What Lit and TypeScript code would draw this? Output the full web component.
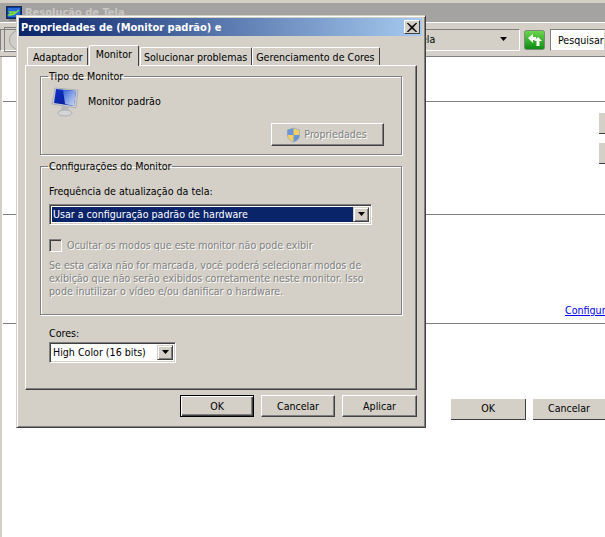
import { LitElement, html, css, svg } from "lit";
import { customElement } from "lit/decorators.js";

const arrow = svg`<svg width="9" height="5" viewBox="0 0 9 5"><path d="M1 0h7L4.500 4z" fill="#000"/></svg>`;

@customElement("app-root")
export class AppRoot extends LitElement {
  static styles = css`
    :host { display: block; width: 605px; height: 537px; position: relative; overflow: hidden; background: #fff;
      font-family: "DejaVu Sans Condensed", "DejaVu Sans", sans-serif; font-stretch: condensed; font-size: 10.6px; color: #000; line-height: 13px; }
    * { box-sizing: border-box; }
    .bg { height: 537px; display: flex; flex-direction: column; padding-left: 3px; background: #fff; box-shadow: inset 2px 0 0 #d4d0c8; }
    .strip { height: 3px; margin-left: -3px; background: #d4d0c8; flex: none; }
    .bgtitle { height: 19px; margin-left: -3px; flex: none; display: flex; align-items: center; gap: 3px; padding-left: 6px; background: #a5a3a2; color: #c9c7c3; font-weight: 700; font-size: 11px; }
    .bgtitle svg { margin-top: 2px; }
    .toolbar { height: 35px; margin-left: -3px; flex: none; background: #d4d0c8; border-bottom: 1px solid #808080; display: flex; align-items: center; justify-content: flex-end; border-top: 1px solid #fff; position: relative; }
    .addr { width: 520px; height: 22px; border: 1px solid; border-color: #808080 #fff #fff #808080; display: flex; align-items: center; justify-content: flex-end; padding-right: 11px; }
    .addr-text { flex: 1; padding-left: 420px; }
    .go { width: 21px; height: 20px; margin: 0 5px 0 4px; flex: none; }
    .search { width: 55px; height: 22px; background: #fff; border: 1px solid; border-color: #808080 #d4d0c8 #d4d0c8 #808080; flex: none; padding: 4px 0 0 7px; white-space: nowrap; overflow: hidden; }
    .back { position: absolute; left: 4px; top: 4px; width: 30px; height: 25px; border: 1px solid #808080; display: flex; align-items: center; padding-left: 4px; }
    .circle { width: 20px; height: 20px; border-radius: 50%; background: #d0cec8; border: 1px solid #a0a0a0; }
    .s1 { height: 45px; flex: none; border-bottom: 1px solid #808080; }
    .s2 { height: 113px; flex: none; border-bottom: 1px solid #808080; display: flex; flex-direction: column; gap: 9px; align-items: flex-end; padding-top: 11px; }
    .stub { width: 6px; height: 21px; background: #d4d0c8; border-bottom: 1px solid #404040; flex: none; }
    .s3 { height: 109px; flex: none; border-bottom: 1px solid #808080; display: flex; align-items: flex-end; padding: 0 0 6px 562px; white-space: nowrap; overflow: hidden; }
    .s3 a { color: #00e; text-decoration: underline; }
    .s4 { display: flex; gap: 7px; padding: 75px 0 0 448px; white-space: nowrap; }
    .flat { width: 75px; height: 21px; flex: none; text-align: center; line-height: 19px; background: #d4d0c8; border-right: 1px solid #404040; border-bottom: 1px solid #404040; }
    .s4 .flat:last-child { width: 72px; border-right: none; }

    .dialog { position: absolute; left: 16px; top: 15px; width: 410px; height: 413px; background: #d4d0c8; border: 1px solid; border-color: #d4d0c8 #404040 #404040 #d4d0c8; box-shadow: inset 1px 1px 0 #fff, inset -1px -1px 0 #808080; padding: 2px 3px 2px 2px; display: flex; flex-direction: column; }
    .dtitle { height: 18px; flex: none; background: linear-gradient(90deg, #0a246a, #a6caf0); color: #fff; font-weight: 700; display: flex; align-items: center; justify-content: space-between; padding: 0 2px 0 2px; font-size: 11px; white-space: nowrap; }
    .close { width: 16px; height: 14px; background: #d4d0c8; border: 1px solid; border-color: #fff #404040 #404040 #fff; display: flex; align-items: center; justify-content: center; }
    .tabs { display: flex; align-items: flex-end; height: 20px; margin: 9px 0 0 8px; position: relative; z-index: 1; flex: none; }
    .tab { height: 18px; padding: 3px 4px 0 3px; background: #d4d0c8; border: 1px solid; border-color: #fff #404040 transparent #fff; border-bottom: none; border-radius: 2px 2px 0 0; white-space: nowrap; margin-right: 1px; }
    .tab:first-child { padding-left: 5px; }
    .tab:nth-child(3) { margin-right: 0; }
    .tab.on { height: 21px; margin: 0 1px -1px 0; padding: 2px 6px 0 6px; }
    .panel { margin-left: 6px; width: 392px; height: 325px; flex: none; background: #d4d0c8; border: 1px solid; border-color: #fff #404040 #404040 #fff; box-shadow: inset -1px -1px 0 #808080; padding: 4px 0 0 14px; }
    fieldset { margin: 0; width: 362px; min-inline-size: 0; border: 1px solid #808080; box-shadow: 1px 1px 0 #fff, inset 1px 1px 0 #fff; padding: 0 8px; display: block; }
    legend { padding: 0 1px; margin-left: -1px; line-height: 13px; }
    .g1 { height: 85px; }
    .g2 { height: 155px; margin-top: 5px; }
    .mon { display: flex; align-items: center; gap: 9px; margin: 2px 0 0 2px; height: 33px; }
    .g1foot { display: flex; justify-content: flex-end; margin: 5px 9px 0 0; }
    .btn { height: 23px; width: 113px; background: #d4d0c8; border: 1px solid; border-color: #fff #404040 #404040 #fff; box-shadow: inset -1px -1px 0 #808080; display: flex; align-items: center; justify-content: center; gap: 3px; padding-right: 2px; }
    .dis { color: #808080; text-shadow: 1px 1px 0 #fff; }
    .lbl { margin-top: 12px; }
    .sel { display: flex; border: 1px solid; border-color: #808080 #fff #fff #808080; box-shadow: inset 1px 1px 0 #404040, inset -1px -1px 0 #d4d0c8; padding: 2px; height: 21px; background: #fff; }
    .sel1 { margin-top: 6px; width: 323px; }
    .sel-text { flex: 1; padding: 1px 0 0 1px; white-space: nowrap; overflow: hidden; }
    .sel1 .sel-text { background: #0a246a; color: #fff; }
    .ddb { width: 16px; flex: none; background: #d4d0c8; border: 1px solid; border-color: #d4d0c8 #404040 #404040 #d4d0c8; box-shadow: inset 1px 1px 0 #fff, inset -1px -1px 0 #808080; display: flex; align-items: center; justify-content: center; }
    .chk { display: flex; align-items: center; gap: 5px; margin-top: 14px; height: 13px; }
    .box { width: 13px; height: 13px; border: 1px solid; border-color: #808080 #fff #fff #808080; box-shadow: inset 1px 1px 0 #404040, inset -1px -1px 0 #d4d0c8; flex: none; }
    .desc { margin-top: 7px; width: 330px; }
    .cores { margin: 12px 0 0 9px; }
    .sel2 { margin: 2px 0 0 9px; width: 127px; height: 21px; }
    .foot { display: flex; gap: 7px; margin: 5px 0 0 161px; flex: none; }
    .b { width: 74px; height: 22px; text-align: center; line-height: 20px; background: #d4d0c8; border: 1px solid; border-color: #fff #404040 #404040 #fff; box-shadow: inset -1px -1px 0 #808080; flex: none; }
    .b.def { border-color: #000; box-shadow: inset 1px 1px 0 #fff, inset -1px -1px 0 #404040, inset -2px -2px 0 #808080; }
    .b.last { width: 75px; }
  `;

  render() {
    return html`
      <div class="bg">
        <div class="strip"></div>
        <div class="bgtitle">
          <svg width="16" height="16" viewBox="0 0 16 16"><rect x=".5" y=".5" width="15" height="12" fill="#0a3a9a" stroke="#1b2b50"/><rect x="2" y="2" width="12" height="9" fill="#2a6ad8"/><path d="M3 9l2-2-1-1h5v1L5 9H3zM7 9l6-5" stroke="#7fe03a" stroke-width="1.500" fill="none"/><rect x="3" y="13" width="10" height="2" fill="#8a8a8a"/></svg>
          <span>Resolução de Tela</span>
        </div>
        <div class="toolbar">
          <div class="back"><div class="circle"></div></div>
          <div class="addr"><span class="addr-text">ela</span>${arrow}</div>
          <svg class="go" viewBox="0 0 21 20">
            <defs><linearGradient id="g" x1="0" y1="0" x2="0" y2="1"><stop offset="0" stop-color="#6ed850"/><stop offset="1" stop-color="#0c8a10"/></linearGradient></defs>
            <rect x=".5" y=".5" width="20" height="19" rx="2" fill="url(#g)" stroke="#7a8a7a"/>
            <path d="M4 8l5-4v3h3v3H9v3z" fill="#fff"/><path d="M14 7l4 4h-2.500v5h-3v-5H10z" fill="#fff"/>
          </svg>
          <div class="search">Pesquisar</div>
        </div>
        <div class="s1"></div>
        <div class="s2"><div class="stub"></div><div class="stub"></div></div>
        <div class="s3"><a>Configur</a></div>
        <div class="s4"><div class="flat">OK</div><div class="flat">Cancelar</div></div>
      </div>

      <div class="dialog">
        <div class="dtitle">
          <span>Propriedades de (Monitor padrão) e</span>
          <div class="close"><svg width="10" height="9" viewBox="0 0 10 9"><path d="M1 0l4 3.500L9 0h1L6 4.500 10 9H9L5 5.500 1 9H0l4-4.500L0 0z" fill="#000" stroke="#000" stroke-width=".5"/></svg></div>
        </div>
        <div class="tabs">
          <div class="tab">Adaptador</div>
          <div class="tab on">Monitor</div>
          <div class="tab">Solucionar problemas</div>
          <div class="tab">Gerenciamento de Cores</div>
        </div>
        <div class="panel">
          <fieldset class="g1">
            <legend>Tipo de Monitor</legend>
            <div class="mon">
              <svg width="28" height="32" viewBox="0 0 28 32" style="flex:none">
                <defs>
                  <linearGradient id="m" x1="0" y1="0" x2="1" y2="1"><stop offset="0" stop-color="#1034c8"/><stop offset="1" stop-color="#06148c"/></linearGradient>
                  <linearGradient id="gl" x1="0" y1="0" x2="1" y2="1"><stop offset="0" stop-color="#3a66d8"/><stop offset="1" stop-color="#d6e0f6"/></linearGradient>
                </defs>
                <path d="M4 2l23 2-2 18-24-4z" fill="#c8ccd4" stroke="#9a9ea6" stroke-width=".6"/>
                <path d="M5 3l20 2-2 15L3 17z" fill="url(#m)"/>
                <path d="M12 4l13 1-2 15-9-2z" fill="url(#gl)"/>
                <path d="M11 20h6l1 4h-8z" fill="#b4b6ba"/>
                <ellipse cx="14" cy="27" rx="7" ry="3" fill="#d2d4d8" stroke="#aeb0b4"/>
              </svg>
              <span>Monitor padrão</span>
            </div>
            <div class="g1foot">
              <div class="btn dis">
                <svg width="15" height="16" viewBox="0 0 14 16"><path d="M7 1l6 2v5c0 4-3 6-6 7-3-1-6-3-6-7V3z" fill="#f0d060" stroke="#a8b0bc"/><path d="M7 1v7H1V3zM7 8h6c0 4-3 6-6 7z" fill="#6a96d8"/></svg>
                Propriedades
              </div>
            </div>
          </fieldset>
          <fieldset class="g2">
            <legend>Configurações do Monitor</legend>
            <div class="lbl">Frequência de atualização da tela:</div>
            <div class="sel sel1"><div class="sel-text">Usar a configuração padrão de hardware</div><div class="ddb">${arrow}</div></div>
            <div class="chk dis"><div class="box"></div><span>Ocultar os modos que este monitor não pode exibir</span></div>
            <div class="desc dis">Se esta caixa não for marcada, você poderá selecionar modos de exibição que não serão exibidos corretamente neste monitor. Isso pode inutilizar o vídeo e/ou danificar o hardware.</div>
          </fieldset>
          <div class="cores">Cores:</div>
          <div class="sel sel2"><div class="sel-text">High Color (16 bits)</div><div class="ddb">${arrow}</div></div>
        </div>
        <div class="foot">
          <div class="b def">OK</div><div class="b">Cancelar</div><div class="b last">Aplicar</div>
        </div>
      </div>
    `;
  }
}
